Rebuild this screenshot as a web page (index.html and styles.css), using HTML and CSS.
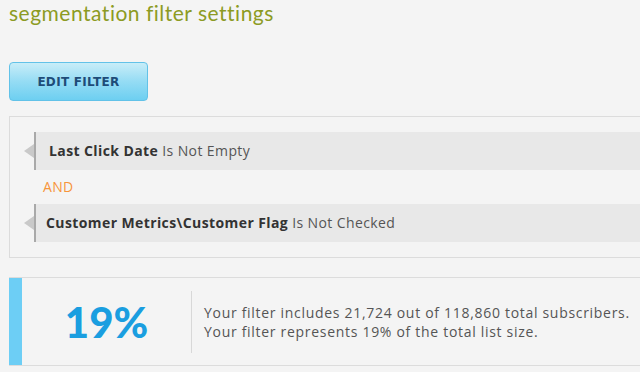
FILE: index.html
```html
<!DOCTYPE html>
<html lang="en">

    <head>
        <meta charset="UTF-8">
        <meta name="viewport" content="width=device-width, initial-scale=1.0">
        <title>Segmentation Filter Settings</title>
        <link rel="stylesheet" href="styles.css">
    </head>

    <body>
        <h1 class="page-title">segmentation filter settings</h1>

        <button type="button" class="btn-edit">EDIT FILTER</button>

        <div class="filter-box">
            <div class="rule">
                <b>Last Click Date</b> Is Not Empty
            </div>
            <div class="joiner">AND</div>
            <div class="rule rule-wide">
                <b>Customer Metrics\Customer Flag</b> Is Not Checked
            </div>
        </div>

        <div class="summary">
            <div class="summary-bar"></div>
            <div class="summary-pct">19%</div>
            <div class="summary-text">
                <p>Your filter includes 21,724 out of 118,860 total subscribers.</p>
                <p>Your filter represents 19% of the total list size.</p>
            </div>
        </div>
    </body>

</html>
```

FILE: styles.css
```css
body {
    margin: 0;
    padding: 0 0 0 9px;
    background-color: #f4f4f4;
    font-family: "Open Sans", Arial, sans-serif;
    color: #555;
    overflow: hidden;
}

.page-title {
    margin: 0;
    padding-top: 1px;
    font-family: Lato, "Open Sans", sans-serif;
    font-weight: normal;
    font-size: 21px;
    line-height: 24px;
    color: #8c9b23;
    letter-spacing: 0.5px;
}

.btn-edit {
    display: block;
    margin-top: 37px;
    width: 139px;
    height: 39px;
    border: 1px solid #62c2e8;
    border-radius: 4px;
    background: linear-gradient(to bottom, #c8edf8 0%, #95dcf4 50%, #6dcff1 100%);
    color: #1e4c78;
    font-family: "DejaVu Sans", Verdana, sans-serif;
    font-weight: bold;
    font-size: 12px;
    letter-spacing: 0.3px;
    cursor: pointer;
}

.filter-box {
    margin-top: 15px;
    height: 125px;
    padding: 15px 0 0 24px;
    border: 1px solid #dcdcdc;
    border-right: none;
}

.rule {
    position: relative;
    height: 38px;
    line-height: 38px;
    padding-left: 13px;
    background-color: #e8e8e8;
    border-left: 2px solid #a9a9a9;
    font-size: 14px;
    letter-spacing: 0.4px;
    color: #555;
}

.rule-wide {
    padding-left: 10px;
}

.rule b {
    color: #333;
}

/* little pointer on the left of each rule */
.rule::before {
    content: "";
    position: absolute;
    left: -12px;
    top: 12px;
    border-style: solid;
    border-width: 7px 10px 7px 0;
    border-color: transparent #c9c9c9 transparent transparent;
}

.joiner {
    height: 34px;
    line-height: 34px;
    padding-left: 9px;
    font-size: 14px;
    letter-spacing: 0.3px;
    color: #f7953b;
}

.summary {
    display: flex;
    align-items: center;
    margin-top: 19px;
    height: 87px;
    border-top: 1px solid #dcdcdc;
    border-bottom: 1px solid #dcdcdc;
}

.summary-bar {
    align-self: stretch;
    flex: none;
    width: 13px;
    background-color: #6dcef5;
}

.summary-pct {
    flex: none;
    width: 169px;
    text-align: center;
    font-family: Lato, sans-serif;
    font-weight: 900;
    font-size: 42px;
    color: #1a9ee0;
}

.summary-text {
    height: 62px;
    display: flex;
    flex-direction: column;
    justify-content: center;
    padding-left: 12px;
    border-left: 1px solid #d8d8d8;
    font-size: 14px;
    line-height: 19px;
    letter-spacing: 0.7px;
    white-space: nowrap;
}

.summary-text p {
    margin: 0;
}
```
